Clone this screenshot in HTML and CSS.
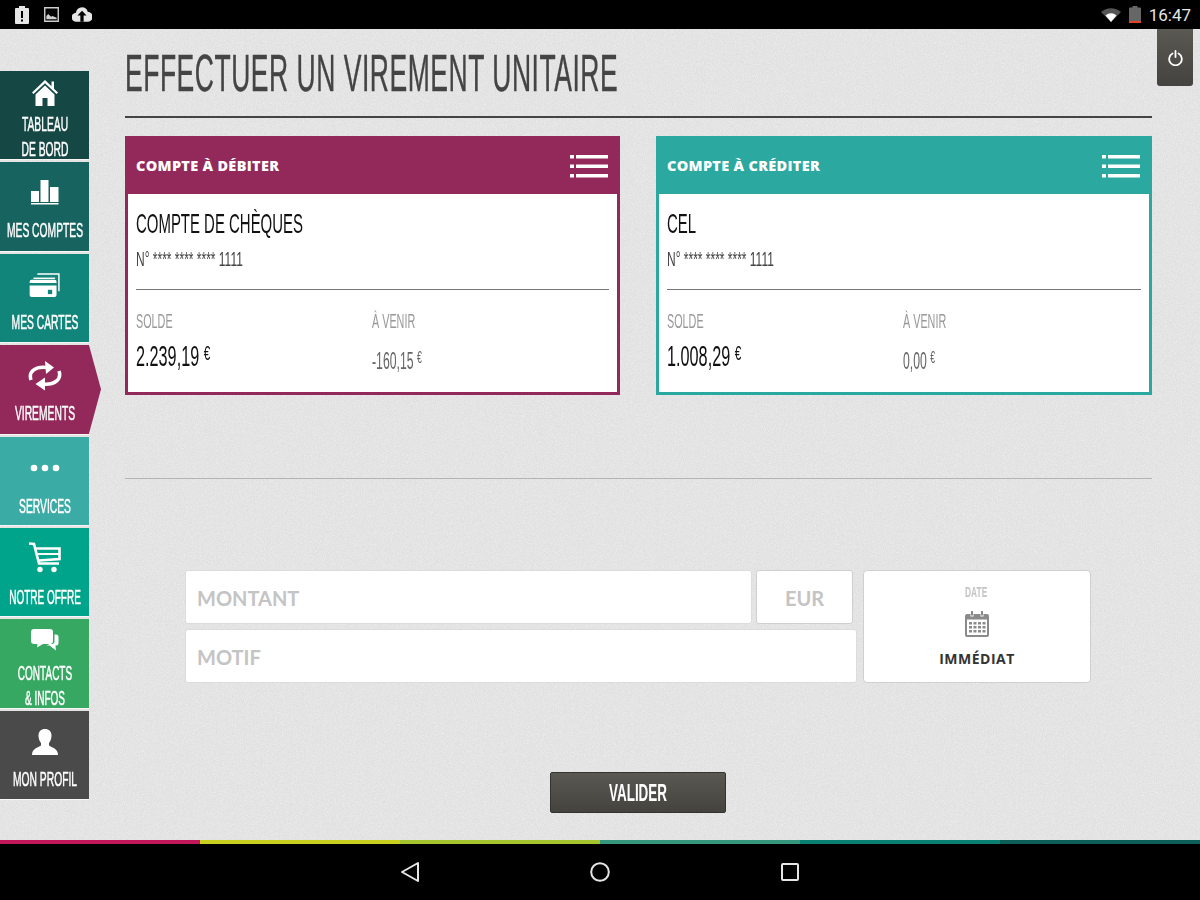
FILE: index.html
```html
<!DOCTYPE html>
<html lang="fr">
<head>
    <meta charset="UTF-8">
    <title>Effectuer un virement unitaire</title>
    <link rel="stylesheet" href="styles.css">
</head>
<body>
    <div class="status-bar">
        <div class="status-left">
            <svg width="14" height="18" viewBox="0 0 14 18"><path fill="#e6e6e6" d="M4 0h6v2h3a1 1 0 0 1 1 1v14a1 1 0 0 1-1 1H1a1 1 0 0 1-1-1V3a1 1 0 0 1 1-1h3z"/><path fill="#000" d="M6 5h2v7H6zM6 13.500h2v2H6z"/></svg>
            <svg width="15" height="15" viewBox="0 0 16 16"><path fill="none" stroke="#cfcfcf" stroke-width="1.500" d="M.8.800h14.400v14.400H.8z"/><path fill="#cfcfcf" d="M2.500 13V9.500l2-2 3 3 1.500-1 4.500 2V13z"/></svg>
            <svg width="20" height="15" viewBox="0 0 22 16"><path fill="#e6e6e6" d="M11 0a6.500 6.500 0 0 1 6.300 5A5.200 5.200 0 0 1 17 16H5A5 5 0 0 1 4.300 6 6.800 6.800 0 0 1 11 0z"/><path fill="#000" d="M11 4l5 5h-3.200v7H9.200V9H6z"/></svg>
        </div>
        <div class="status-right">
            <svg width="20" height="14" viewBox="0 0 20 14"><path fill="#555" d="M0 4a15 15 0 0 1 20 0l-10 10z"/><path fill="#fff" d="M4.500 7.500a8 8 0 0 1 11 0L10 14z"/></svg>
            <svg width="12" height="17" viewBox="0 0 12 17"><path fill="#666" d="M3.500 0h5v1.500H11a1 1 0 0 1 1 1V17H0V2.500a1 1 0 0 1 1-1h2.500z"/><path fill="#e0452a" d="M0 15h12v2H0z"/></svg>
            <span class="clock">16:47</span>
        </div>
    </div>

    <div class="app">
        <!-- paper grain behind the whole screen -->
        <svg class="grain" width="1200" height="811">
            <filter id="grainFilter"><feTurbulence type="fractalNoise" baseFrequency="1.100" numOctaves="2" seed="4"/><feColorMatrix values="0 0 0 0 1  0 0 0 0 1  0 0 0 0 1  1.500 0 0 0 -0.500"/></filter>
            <rect width="1200" height="811" filter="url(#grainFilter)" opacity="0.5"/>
        </svg>

        <nav class="side-nav">
            <a class="nav-item nav-board">
                <svg width="28" height="28" viewBox="0 0 28 28"><path fill="#fff" d="M14 1L1 13.500l1.500 1.500L14 4.200 25.500 15l1.500-1.500-4-3.800V2.500h-2.500v4.800z"/><path fill="#fff" d="M14 6.500L4.500 15.500V27h7v-8h5v8h7V15.500z"/></svg>
                <span class="nav-label">TABLEAU<br>DE BORD</span>
            </a>
            <a class="nav-item nav-accounts">
                <svg width="30" height="26" viewBox="0 0 30 26"><path fill="#fff" d="M1 12h8v11H1zM10.500 1h8v22h-8zM20 8h8.500v15H20zM1 24h27.500v1.500H1z"/></svg>
                <span class="nav-label">MES COMPTES</span>
            </a>
            <a class="nav-item nav-cards">
                <svg width="32" height="24" viewBox="0 0 32 25"><path fill="none" stroke="#fff" stroke-width="1.500" d="M8 1h22.500v18"/><path fill="none" stroke="#fff" stroke-width="1.500" d="M4 5.500h22.500"/><path fill="#fff" d="M2 7h24a2 2 0 0 1 2 2v1.500H0V9a2 2 0 0 1 2-2zM0 13h28v10a2 2 0 0 1-2 2H2a2 2 0 0 1-2-2z"/><path fill="#11857a" d="M19 17.500h4.500V22H19z"/></svg>
                <span class="nav-label">MES CARTES</span>
            </a>
            <a class="nav-item nav-transfers">
                <svg width="34" height="30" viewBox="0 0 34 30"><path fill="none" stroke="#fff" stroke-width="3.500" d="M3 19C0 10 8 5 19 6.500"/><path fill="#fff" d="M17 0l9 6.500L18 13z"/><path fill="none" stroke="#fff" stroke-width="3.500" d="M31 10c3 9-5 14-16 13"/><path fill="#fff" d="M17 16.500L7.500 23l9.500 6.500z"/></svg>
                <span class="nav-label">VIREMENTS</span>
            </a>
            <a class="nav-item nav-services">
                <svg class="dots-icon" width="30" height="8" viewBox="0 0 30 8"><circle fill="#fff" cx="4" cy="4" r="3.300"/><circle fill="#fff" cx="15" cy="4" r="3.300"/><circle fill="#fff" cx="26" cy="4" r="3.300"/></svg>
                <span class="nav-label">SERVICES</span>
            </a>
            <a class="nav-item nav-offer">
                <svg width="32" height="31" viewBox="0 0 32 31"><path fill="none" stroke="#fff" stroke-width="2.600" d="M0 1.500l5 .5 5 19.500h20M7 6.500h23.500V17L10 18.500"/><path fill="none" stroke="#fff" stroke-width="2" d="M9 12h21"/><circle fill="#fff" cx="11" cy="27.500" r="2.700"/><circle fill="#fff" cx="25" cy="27.500" r="2.700"/></svg>
                <span class="nav-label">NOTRE OFFRE</span>
            </a>
            <a class="nav-item nav-contacts">
                <svg width="28" height="22" viewBox="0 0 28 22"><path fill="#fff" d="M3 0h16a3 3 0 0 1 3 3v9a3 3 0 0 1-3 3h-7l-6 3.500.5-3.500H3a3 3 0 0 1-3-3V3a3 3 0 0 1 3-3z"/><path fill="#fff" d="M23.500 5.500H25a2.500 2.500 0 0 1 2.500 2.500v6a2.500 2.500 0 0 1-2.500 2.500h-.5l.5 5-6.500-5h-3l3-1.500h2a2.500 2.500 0 0 0 3-2.500z"/></svg>
                <span class="nav-label">CONTACTS<br>&amp; INFOS</span>
            </a>
            <a class="nav-item nav-profile">
                <svg width="26" height="26" viewBox="0 0 26 26"><path fill="#fff" d="M13 0c4 0 6.500 2.500 6.500 6.500 0 3-1 5.500-2.500 7.500v2.500c3 2 9 3 9 9.500H0c0-6.500 6-7.500 9-9.500V14c-1.500-2-2.500-4.500-2.500-7.500C6.500 2.500 9 0 13 0z"/></svg>
                <span class="nav-label">MON PROFIL</span>
            </a>
        </nav>

        <main class="content">
            <h1 class="page-title"><span class="narrow">EFFECTUER UN VIREMENT UNITAIRE</span></h1>

            <div class="accounts">
                <section class="account account-debit">
                    <header class="account-head">
                        <span class="account-head-title">COMPTE À DÉBITER</span>
                        <svg class="list-icon" width="38" height="23" viewBox="0 0 38 23"><path fill="#fff" d="M0 0h4v3.500H0zM6 0h32v3.500H6zM0 9.500h4V13H0zM6 9.500h32V13H6zM0 19h4v3.500H0zM6 19h32v3.500H6z"/></svg>
                    </header>
                    <div class="account-body">
                        <div class="account-name"><span class="narrow">COMPTE DE CHÈQUES</span></div>
                        <div class="account-number"><span class="narrow">N° **** **** **** 1111</span></div>
                        <div class="account-figures">
                            <div class="figure">
                                <div class="figure-label"><span class="narrow">SOLDE</span></div>
                                <div class="figure-main"><span class="narrow">2.239,19 <sup>€</sup></span></div>
                            </div>
                            <div class="figure">
                                <div class="figure-label"><span class="narrow">À VENIR</span></div>
                                <div class="figure-next"><span class="narrow">-160,15 <sup>€</sup></span></div>
                            </div>
                        </div>
                    </div>
                </section>
                <section class="account account-credit">
                    <header class="account-head">
                        <span class="account-head-title">COMPTE À CRÉDITER</span>
                        <svg class="list-icon" width="38" height="23" viewBox="0 0 38 23"><path fill="#fff" d="M0 0h4v3.500H0zM6 0h32v3.500H6zM0 9.500h4V13H0zM6 9.500h32V13H6zM0 19h4v3.500H0zM6 19h32v3.500H6z"/></svg>
                    </header>
                    <div class="account-body">
                        <div class="account-name"><span class="narrow">CEL</span></div>
                        <div class="account-number"><span class="narrow">N° **** **** **** 1111</span></div>
                        <div class="account-figures">
                            <div class="figure">
                                <div class="figure-label"><span class="narrow">SOLDE</span></div>
                                <div class="figure-main"><span class="narrow">1.008,29 <sup>€</sup></span></div>
                            </div>
                            <div class="figure">
                                <div class="figure-label"><span class="narrow">À VENIR</span></div>
                                <div class="figure-next"><span class="narrow">0,00 <sup>€</sup></span></div>
                            </div>
                        </div>
                    </div>
                </section>
            </div>

            <hr class="separator">

            <form class="transfer-form">
                <div class="form-fields">
                    <div class="form-row">
                        <div class="field field-amount">MONTANT</div>
                        <div class="field field-currency">EUR</div>
                    </div>
                    <div class="field field-reason">MOTIF</div>
                </div>
                <div class="date-box">
                    <div class="date-label"><span class="narrow">DATE</span></div>
                    <svg width="24" height="26" viewBox="0 0 24 26"><path fill="#8a8a8a" d="M2 3h3.500v2.500h3V3h7v2.500h3V3H22a2 2 0 0 1 2 2v19a2 2 0 0 1-2 2H2a2 2 0 0 1-2-2V5a2 2 0 0 1 2-2z"/><path fill="#8a8a8a" d="M6 0h2v4.500H6zM16 0h2v4.500h-2z"/><path fill="#fff" d="M2 8.500h20V24H2z"/><path fill="#8a8a8a" d="M4 11h3v2.500H4zM8.500 11h3v2.500h-3zM13 11h3v2.500h-3zM17.500 11h3v2.500h-3zM4 15h3v2.500H4zM8.500 15h3v2.500h-3zM13 15h3v2.500h-3zM17.500 15h3v2.500h-3zM4 19h3v2.500H4zM8.500 19h3v2.500h-3zM13 19h3v2.500h-3zM17.500 19h3v2.500h-3z"/></svg>
                    <div class="date-value">IMMÉDIAT</div>
                </div>
            </form>

            <div class="actions">
                <button class="validate-btn" type="button"><span class="narrow">VALIDER</span></button>
            </div>
        </main>

        <button class="power-btn" type="button" aria-label="Déconnexion">
            <svg width="15" height="16" viewBox="0 0 15 16"><path fill="none" stroke="#fff" stroke-width="1.800" stroke-linecap="round" d="M4.500 3.500a6.300 6.300 0 1 0 6 0M7.500 1v6"/></svg>
        </button>
    </div>

    <div class="color-strip">
        <span class="strip-a"></span><span class="strip-b"></span><span class="strip-c"></span><span class="strip-d"></span><span class="strip-e"></span><span class="strip-f"></span>
    </div>

    <div class="android-nav">
        <svg width="20" height="22" viewBox="0 0 20 22"><path fill="none" stroke="#e6e6e6" stroke-width="2" stroke-linejoin="round" d="M18 2v18L2 11z"/></svg>
        <svg width="20" height="20" viewBox="0 0 20 20"><circle fill="none" stroke="#e6e6e6" stroke-width="2" cx="10" cy="10" r="8.800"/></svg>
        <svg class="recents-icon" width="18" height="18" viewBox="0 0 18 18"><rect fill="none" stroke="#e6e6e6" stroke-width="2" x="1" y="1" width="16" height="16" rx="1"/></svg>
    </div>
</body>
</html>
```

FILE: styles.css
```css
* {
    box-sizing: border-box;
    margin: 0;
    padding: 0;
}

html, body {
    width: 1200px;
    height: 900px;
    overflow: hidden;
}

body {
    display: flex;
    flex-direction: column;
    background: #e2e2e2;
    font-family: "Liberation Sans", Arial, sans-serif;
}

/* condensed look: no condensed family is installed, so squeeze the glyphs */
.narrow {
    display: inline-block;
    white-space: nowrap;
    transform: scaleX(0.56);
    transform-origin: left center;
}

.status-bar {
    height: 29px;
    flex: none;
    background: #000;
    display: flex;
    justify-content: space-between;
    align-items: center;
    padding: 0 9px 0 15px;
}

.status-left {
    display: flex;
    align-items: center;
    gap: 15px;
}

.status-left svg:last-child {
    margin-left: -2px;
}

.status-right {
    display: flex;
    align-items: center;
    gap: 8px;
}

.clock {
    color: #e6e6e6;
    font-family: Roboto, sans-serif;
    font-size: 17px;
}

.app {
    position: relative;
    z-index: 0;
    flex: 1;
    display: flex;
    background-color: #e0e0e0;
}

.grain {
    position: absolute;
    top: 0;
    left: 0;
    z-index: -1;
}

.side-nav {
    width: 89px;
    flex: none;
    margin-top: 42px;
    display: flex;
    flex-direction: column;
    gap: 3px;
}

.nav-item {
    position: relative;
    height: 88.400px;
    display: flex;
    flex-direction: column;
    align-items: center;
    color: #fff;
    padding-top: 8px;
    box-shadow: 0 1px 0 rgba(255, 255, 255, 0.7);
}

.nav-item svg {
    flex: none;
}

.nav-label {
    flex: none;
    margin-top: 5px;
    width: 160px;
    text-align: center;
    font-size: 20px;
    line-height: 25px;
    white-space: nowrap;
    transform: scaleX(0.515);
    -webkit-text-stroke: 0.5px #fff;
}

.nav-board { background: #154744; }
.nav-accounts { background: #17635f; padding-top: 17px; }
.nav-cards { background: #11857a; padding-top: 19px; }
.nav-transfers { background: #93295a; padding-top: 16px; }
.nav-services { background: #3aaba5; }
.nav-offer { background: #00a48a; padding-top: 14px; }
.nav-contacts { background: #36a862; padding-top: 10px; }
.nav-profile { background: #4a4a4a; padding-top: 18px; }

.nav-accounts .nav-label { margin-top: 13px; }
.nav-cards .nav-label { margin-top: 13px; }
.nav-transfers .nav-label { margin-top: 10px; }
.nav-services .dots-icon { margin-top: 19px; }
.nav-services .nav-label { margin-top: 22px; }
.nav-offer .nav-label { margin-top: 12px; transform: scaleX(0.5); }
.nav-contacts .nav-label { margin-top: 10px; transform: scaleX(0.5); }
.nav-profile .nav-label { margin-top: 12px; }

.nav-transfers::after {
    content: "";
    position: absolute;
    left: 89px;
    top: 0;
    width: 12px;
    height: 100%;
    background: #93295a;
    clip-path: polygon(0 0, 100% 50%, 0 100%);
}

.content {
    width: 1027px;
    margin-left: 36px;
    flex: none;
}

.page-title {
    height: 89px;
    padding-top: 14px;
    border-bottom: 2px solid #444;
    font-size: 52px;
    line-height: 60px;
    font-weight: 400;
    letter-spacing: 1px;
    color: #444;
}

.page-title .narrow {
    transform: scaleX(0.51);
    -webkit-text-stroke: 0.4px #444;
}

.accounts {
    display: flex;
    gap: 36px;
    margin-top: 18px;
}

.account {
    height: 259px;
    display: flex;
    flex-direction: column;
    border: 3px solid;
    background: #fff;
}

.account-debit { width: 495px; flex: none; border-color: #93295a; }
.account-credit { flex: 1; border-color: #2ba89f; }

.account-head {
    height: 55px;
    flex: none;
    display: flex;
    justify-content: space-between;
    align-items: center;
    padding: 0 9px 0 8px;
    color: #fff;
}

.account-debit .account-head { background: #93295a; }
.account-credit .account-head { background: #2ba89f; }

.account-head-title {
    font-family: "Open Sans", sans-serif;
    font-size: 14.500px;
    font-weight: 800;
    letter-spacing: 0.3px;
    margin-top: -2px;
}

.account-body {
    flex: 1;
    padding: 13px 8px 0;
}

.account-name {
    font-size: 28px;
    line-height: 34px;
    color: #111;
}

.account-name .narrow {
    transform: scaleX(0.534);
}

.account-number {
    margin-top: 7px;
    height: 42px;
    border-bottom: 1px solid #777;
    font-size: 20px;
    line-height: 22px;
    color: #444;
}

.account-number .narrow {
    transform: scaleX(0.6);
}

.account-figures {
    display: flex;
    margin-top: 19px;
}

.figure {
    width: 236px;
}

.figure-label {
    font-size: 20px;
    line-height: 24px;
    color: #999;
}

.figure-label .narrow {
    transform: scaleX(0.54);
}

.figure-main {
    margin-top: 8px;
    font-size: 29px;
    line-height: 30px;
    color: #111;
}

.figure-next {
    margin-top: 13px;
    font-size: 24px;
    line-height: 30px;
    color: #666;
}

.figure-next .narrow {
    transform: scaleX(0.51);
}

.figure sup {
    font-size: 72%;
    vertical-align: 6px;
    line-height: 0;
}

.separator {
    border: none;
    border-top: 1px solid #b4b4b4;
    margin-top: 83px;
}

.transfer-form {
    display: flex;
    gap: 6px;
    margin: 91px 0 0 60px;
}

.form-fields {
    width: 672px;
    display: flex;
    flex-direction: column;
    gap: 5px;
}

.form-row {
    display: flex;
    gap: 4px;
}

.field {
    height: 54px;
    padding: 2px 0 0 11px;
    display: flex;
    align-items: center;
    background: #fff;
    border: 1px solid #dcdcdc;
    border-radius: 3px;
    color: #c4c4c4;
    font-family: Lato, sans-serif;
    font-size: 20px;
    font-weight: 700;
}

.field-amount { width: 567px; }

.field-currency {
    width: 97px;
    padding-left: 0;
    justify-content: center;
    border-color: #cfcfcf;
}

.date-box {
    width: 228px;
    height: 113px;
    display: flex;
    flex-direction: column;
    align-items: center;
    background: #fff;
    border: 1px solid #d0d0d0;
    border-radius: 4px;
}

.date-label {
    margin-top: 12px;
    width: 24px;
    height: 18px;
    font-size: 15px;
    line-height: 18px;
    font-weight: 700;
    color: #c4c4c4;
}

.date-box svg {
    margin-top: 10px;
}

.date-value {
    margin-top: 12px;
    font-family: "Open Sans", sans-serif;
    font-size: 14px;
    font-weight: 700;
    letter-spacing: 0.5px;
    color: #333;
}

.actions {
    margin: 89px 0 0 425px;
}

.validate-btn {
    width: 176px;
    height: 41px;
    border: 1px solid #333;
    border-radius: 2px;
    background: linear-gradient(#5a5852, #45433f);
    color: #fff;
    font-family: "Liberation Sans", sans-serif;
    font-size: 24px;
    font-weight: 700;
    text-align: left;
    padding-left: 58px;
}

.power-btn {
    position: absolute;
    top: 0;
    right: 7px;
    width: 36px;
    height: 57px;
    border: none;
    border-radius: 0 0 3px 3px;
    background: linear-gradient(#5a5852, #45433f);
    display: flex;
    align-items: center;
    justify-content: center;
}

.color-strip {
    height: 4px;
    flex: none;
    display: flex;
}

.color-strip span { flex: 1; }
.strip-a { background: #c2185b; }
.strip-b { background: #c9cf1f; }
.strip-c { background: #a5c52f; }
.strip-d { background: #37977d; }
.strip-e { background: #0a8072; }
.strip-f { background: #0d5f5a; }

.android-nav {
    height: 56px;
    flex: none;
    background: #000;
    display: flex;
    align-items: center;
    padding-left: 400px;
    gap: 170px;
}

.recents-icon {
    margin-left: 1px;
}
```
